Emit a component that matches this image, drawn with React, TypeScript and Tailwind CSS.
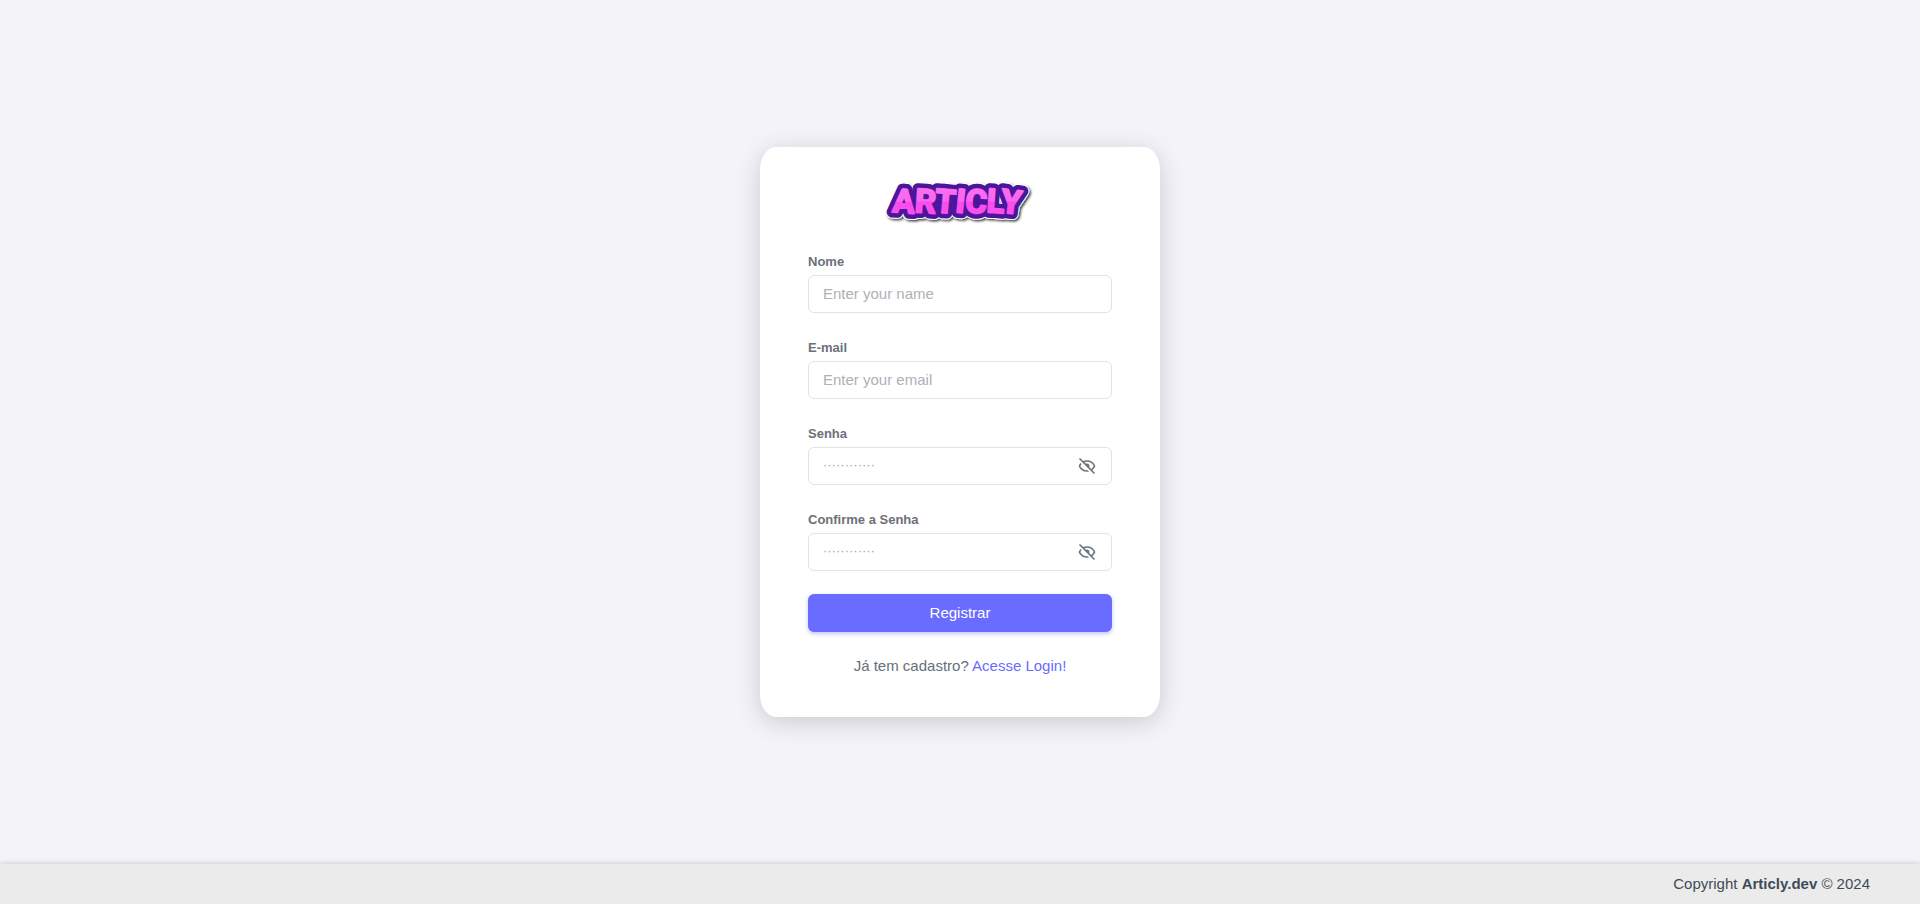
import { useState } from "react";
import { BiHide, BiShow } from "react-icons/bi";

function Logo() {
  const rotate = "4 4 5 6 5 4 7";
  return (
    <svg viewBox="0 0 150 48" className="h-12 w-[150px] overflow-visible" role="img" aria-label="Articly">
      <defs>
        <linearGradient id="pink" gradientUnits="userSpaceOnUse" x1="0" y1="8" x2="0" y2="38">
          <stop offset="0" stopColor="#fb70f0" />
          <stop offset="0.52" stopColor="#fb66f0" />
          <stop offset="0.58" stopColor="#fa4cec" />
          <stop offset="1" stopColor="#fa50ee" />
        </linearGradient>
        <filter id="drop" x="-10%" y="-20%" width="120%" height="150%">
          <feDropShadow dx="1.5" dy="1.5" stdDeviation="0.8" floodColor="#000" floodOpacity="0.75" />
        </filter>
      </defs>
      <g fontSize="33" strokeLinejoin="round" className="font-['Roboto',sans-serif] font-bold">
        <text x="7" y="35" rotate={rotate} fill="#fff" stroke="#fff" strokeWidth="13" filter="url(#drop)" aria-hidden="true">ARTICLY</text>
        <text x="7" y="35" rotate={rotate} fill="#4c169a" stroke="#4c169a" strokeWidth="11" aria-hidden="true">ARTICLY</text>
        <text x="7" y="35" rotate={rotate} fill="url(#pink)" stroke="url(#pink)" strokeWidth="2">ARTICLY</text>
      </g>
    </svg>
  );
}

const inputClass =
  "h-[38px] w-full rounded-md border border-[#e2e3e6] bg-white px-3.5 pb-0.5 text-[15px] text-[#697a8d] outline-none placeholder:text-[#adb1b8] focus:border-[#696cff]";
const secretClass =
  "h-[38px] w-full rounded-md border border-[#e2e3e6] bg-white px-3.5 pb-1 text-[13px] text-[#697a8d] outline-none placeholder:text-[#a2a7ae] focus:border-[#696cff]";

function Field({ id, label, type, placeholder }: { id: string; label: string; type: string; placeholder: string }) {
  const [visible, setVisible] = useState(false);
  const secret = type === "password";
  return (
    <div className="flex flex-col gap-0.5">
      <label htmlFor={id} className="text-[13px] leading-[22px] font-bold text-[#6c7178]">
        {label}
      </label>
      <div className="relative">
        <input
          id={id}
          name={id}
          type={secret && visible ? "text" : type}
          placeholder={placeholder}
          className={secret ? secretClass : inputClass}
        />
        {secret && (
          <button
            type="button"
            aria-label="Mostrar senha"
            onClick={() => setVisible(!visible)}
            className="absolute inset-y-0 right-0 flex cursor-pointer items-center px-[15px] text-xl text-[#6c757d]"
          >
            {visible ? <BiShow /> : <BiHide />}
          </button>
        )}
      </div>
    </div>
  );
}

export default function App() {
  return (
    <div className="flex min-h-screen flex-col bg-[#f4f3f9] font-['Liberation_Sans',Arial,sans-serif] text-[15px] text-[#66707a]">
      <main className="flex flex-1 items-center justify-center p-4">
        <section className="flex w-full max-w-[400px] flex-col rounded-[4%] bg-white px-12 pt-[30px] pb-10 shadow-[0_5px_24px_rgba(0,0,0,0.17)]">
          <div className="flex justify-center">
            <Logo />
          </div>
          <form className="mt-[26px] flex flex-col" onSubmit={(e) => e.preventDefault()}>
            <div className="flex flex-col gap-6">
              <Field id="name" label="Nome" type="text" placeholder="Enter your name" />
              <Field id="email" label="E-mail" type="email" placeholder="Enter your email" />
              <Field id="password" label="Senha" type="password" placeholder="············" />
              <Field id="confirm" label="Confirme a Senha" type="password" placeholder="············" />
            </div>
            <button
              type="submit"
              className="mt-[23px] h-[38px] cursor-pointer rounded-md bg-[#696cff] text-white shadow-[0_2px_4px_rgba(105,108,255,0.4)]"
            >
              Registrar
            </button>
          </form>
          <p className="mt-[23px] text-center leading-[22px]">
            Já tem cadastro?{" "}
            <a href="#login" className="text-[#696cff]">
              Acesse Login!
            </a>
          </p>
        </section>
      </main>
      <footer className="flex h-10 items-center justify-end bg-[#ebebeb] px-[50px] text-[#3f4b57] shadow-[0_0_6px_rgba(0,0,0,0.2)]">
        <p>
          Copyright <strong className="font-bold">Articly.dev</strong> © 2024
        </p>
      </footer>
    </div>
  );
}
